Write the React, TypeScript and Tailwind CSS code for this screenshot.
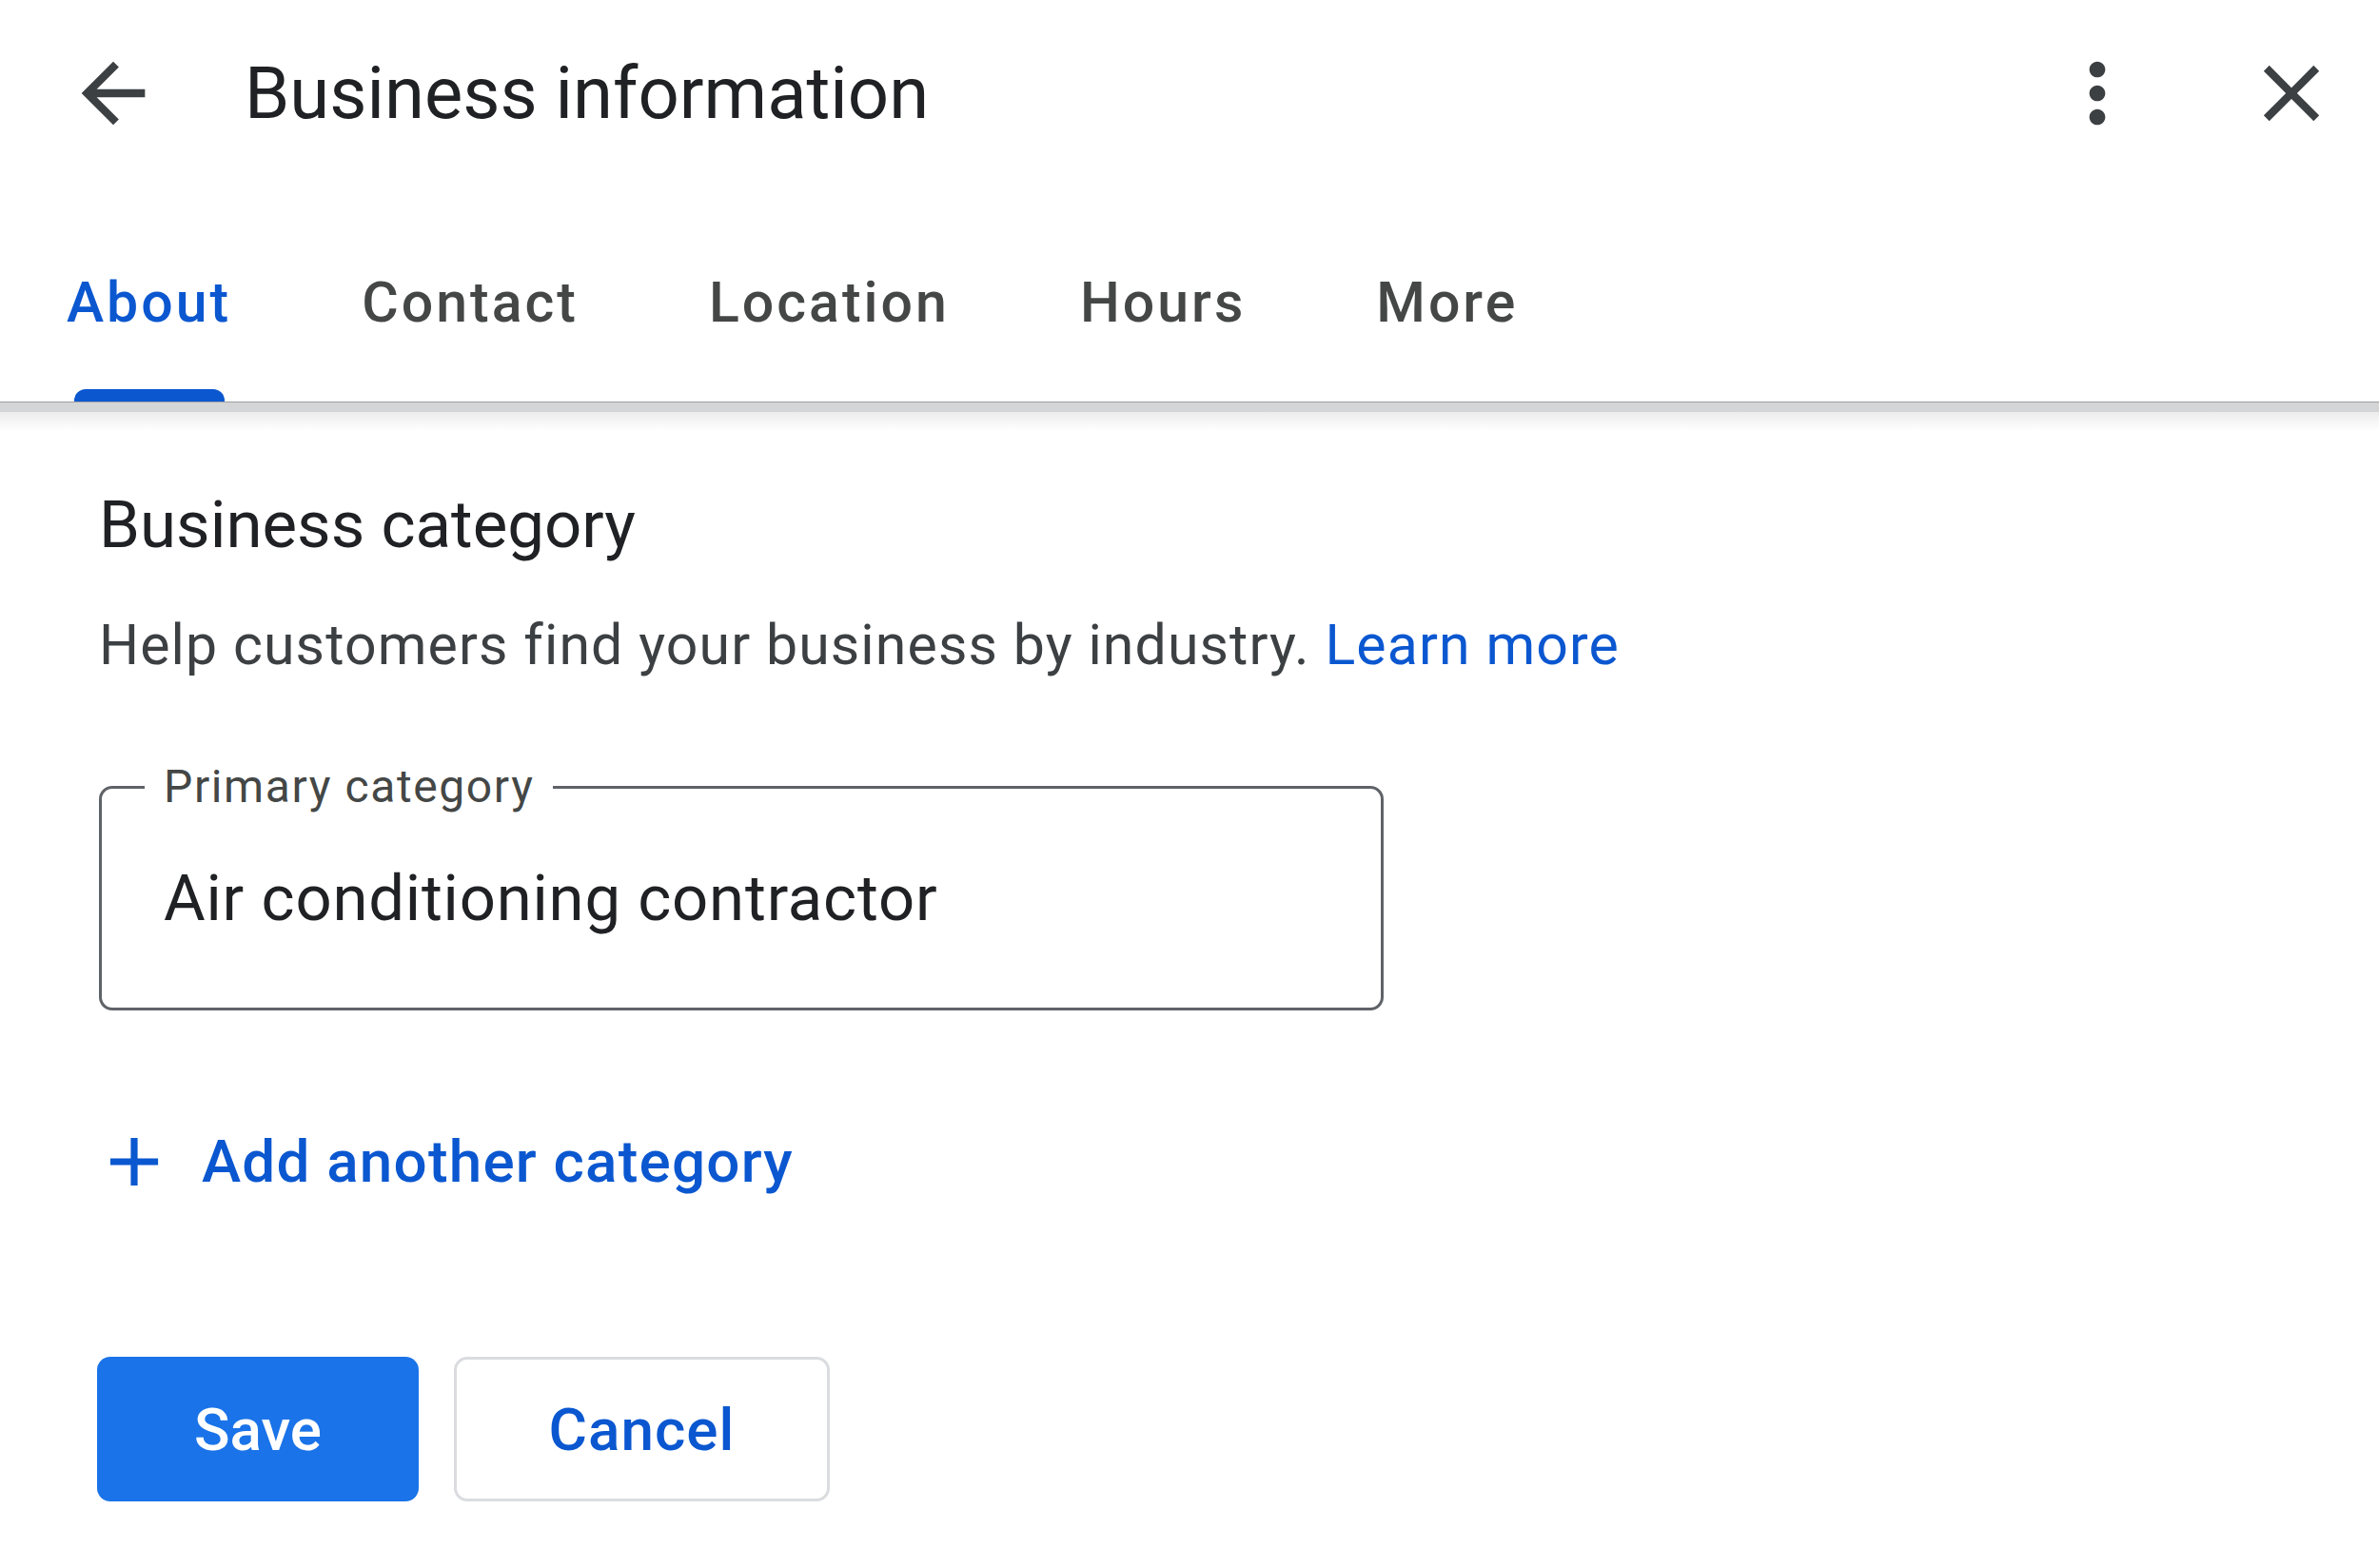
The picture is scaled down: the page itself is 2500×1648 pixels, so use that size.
import React from "react";

const ArrowBack = () => (
  <svg viewBox="0 0 24 24" className="w-[100px] h-[100px]" fill="#3c4043">
    <path d="M20 11H7.83l5.59-5.59L12 4l-8 8 8 8 1.41-1.41L7.83 13H20v-2z" />
  </svg>
);

const MoreVert = () => (
  <svg viewBox="0 0 24 24" className="w-[100px] h-[100px]" fill="#3c4043">
    <path d="M12 8c1.1 0 2-.9 2-2s-.9-2-2-2-2 .9-2 2 .9 2 2 2zm0 2c-1.1 0-2 .9-2 2s.9 2 2 2 2-.9 2-2-.9-2-2-2zm0 6c-1.1 0-2 .9-2 2s.9 2 2 2 2-.9 2-2-.9-2-2-2z" />
  </svg>
);

const Close = () => (
  <svg viewBox="0 0 24 24" className="w-[100px] h-[100px]" fill="#3c4043">
    <path d="M19 6.41L17.59 5 12 10.59 6.41 5 5 6.41 10.59 12 5 17.59 6.41 19 12 13.41 17.59 19 19 17.59 13.41 12z" />
  </svg>
);

const Plus = () => (
  <svg viewBox="0 0 24 24" className="w-[86px] h-[86px]" fill="#0b57d0">
    <path d="M19 13h-6v6h-2v-6H5v-2h6V5h2v6h6v2z" />
  </svg>
);

const tabs = ["About", "Contact", "Location", "Hours", "More"];

export default function App() {
  return (
    <div className="w-[2500px] h-[1648px] bg-white overflow-hidden flex flex-col font-['Roboto',sans-serif]">
      {/* Header */}
      <div className="h-[196px] flex items-center pl-[69px] pr-[42px]">
        <ArrowBack />
        <div className="ml-[88px] text-[76px] leading-[76px] text-[#202124]">Business information</div>
        <div className="ml-auto flex items-center gap-[104px]">
          <MoreVert />
          <Close />
        </div>
      </div>

      {/* Tabs */}
      <div className="h-[226px] flex">
        {tabs.map((t, i) => (
          <div key={t} className="flex flex-col items-center pl-[70px] pr-[67px]">
            <div
              className={
                "mt-[92px] text-[59px] leading-[59px] font-medium tracking-[3px] " +
                (i === 0 ? "text-[#0b57d0]" : "text-[#444746]")
              }
            >
              {t}
            </div>
            {i === 0 && <div className="mt-auto w-[158px] h-[13px] rounded-t-[12px] bg-[#0b57d0]" />}
          </div>
        ))}
      </div>

      {/* Divider with shadow */}
      <div className="h-[1px] bg-[#9e9fa1]" />
      <div className="h-[10px] bg-[#d4d5d7]" />
      <div className="h-[20px] bg-gradient-to-b from-[#ececec] to-white" />

      {/* Content */}
      <div className="flex flex-col pl-[104px] pt-[65px]">
        <div className="text-[69px] leading-[68px] text-[#202124]">Business category</div>
        <div className="mt-[63px] text-[59px] leading-[58px] text-[#3c4043] tracking-[1.1px]">
          Help customers find your business by industry.{" "}
          <span className="text-[#0b57d0]">Learn more</span>
        </div>

        <div className="mt-[119px] relative w-[1350px] h-[236px] border-[3px] border-[#5f6368] rounded-[14px] flex items-center pl-[65px]">
          <span className="absolute left-[45px] top-[-29px] px-[20px] bg-white text-[48px] leading-[54px] text-[#444746] tracking-[1.6px]">
            Primary category
          </span>
          <span className="text-[67px] leading-[67px] text-[#202124] tracking-[0.8px]">Air conditioning contractor</span>
        </div>

        <div className="mt-[116px] flex items-center h-[86px] -ml-[6px]">
          <Plus />
          <span className="ml-[28px] text-[62px] leading-[62px] font-medium text-[#0b57d0] tracking-[1.2px]">
            Add another category
          </span>
        </div>

        <div className="mt-[162px] flex gap-[37px] -ml-[2px]">
          <button className="w-[338px] h-[152px] rounded-[14px] bg-[#1a73e8] text-white text-[62px] font-medium flex items-center justify-center">
            Save
          </button>
          <button className="w-[395px] h-[152px] rounded-[14px] border-[3px] border-[#dadce0] bg-white text-[#0b57d0] text-[62px] font-medium tracking-[1px] flex items-center justify-center">
            Cancel
          </button>
        </div>
      </div>
    </div>
  );
}
